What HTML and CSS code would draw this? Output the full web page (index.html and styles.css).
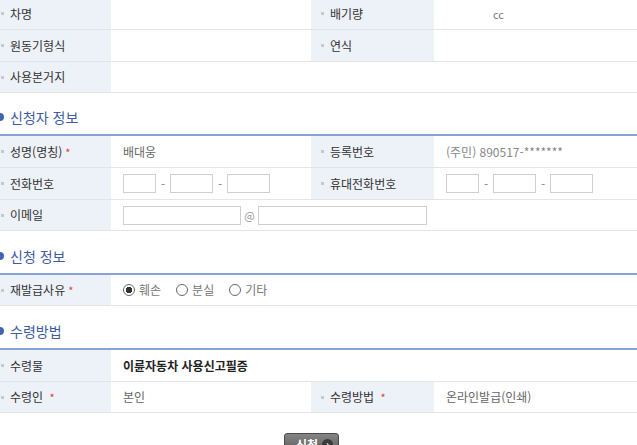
FILE: index.html
```html
<!DOCTYPE html>
<html lang="ko">

<head>
  <meta charset="UTF-8">
  <meta name="viewport" content="width=device-width, initial-scale=1.0">
  <link rel="stylesheet" href="styles.css">
  <title>재발급 신청</title>
</head>

<body>
  <div class="page">
    <table class="info first">
      <colgroup>
        <col class="c-th1"><col class="c-td1"><col class="c-th2"><col>
      </colgroup>
      <tr>
        <th>차명</th>
        <td></td>
        <th>배기량</th>
        <td><span class="unit">cc</span></td>
      </tr>
      <tr>
        <th>원동기형식</th>
        <td></td>
        <th>연식</th>
        <td></td>
      </tr>
      <tr>
        <th>사용본거지</th>
        <td colspan="3"></td>
      </tr>
    </table>

    <h3 class="sect"><span class="dot"></span>신청자 정보</h3>
    <table class="info">
      <colgroup>
        <col class="c-th1"><col class="c-td1"><col class="c-th2"><col>
      </colgroup>
      <tr>
        <th>성명(명칭)<span class="req">*</span></th>
        <td>배대웅</td>
        <th>등록번호</th>
        <td class="light">(주민) 890517-*******</td>
      </tr>
      <tr>
        <th>전화번호</th>
        <td>
          <div class="tel">
            <input type="text" class="w1"><span>-</span><input type="text" class="w2"><span>-</span><input type="text" class="w2">
          </div>
        </td>
        <th>휴대전화번호</th>
        <td>
          <div class="tel">
            <input type="text" class="w1"><span>-</span><input type="text" class="w2"><span>-</span><input type="text" class="w2">
          </div>
        </td>
      </tr>
      <tr>
        <th>이메일</th>
        <td colspan="3">
          <div class="mail">
            <input type="text" class="m1"><span class="at">@</span><input type="text" class="m2">
          </div>
        </td>
      </tr>
    </table>

    <h3 class="sect"><span class="dot"></span>신청 정보</h3>
    <table class="info">
      <colgroup>
        <col class="c-th1"><col class="c-td1"><col class="c-th2"><col>
      </colgroup>
      <tr>
        <th>재발급사유<span class="req">*</span></th>
        <td colspan="3">
          <div class="radios">
            <label><input type="radio" name="why" checked>훼손</label>
            <label><input type="radio" name="why">분실</label>
            <label><input type="radio" name="why">기타</label>
          </div>
        </td>
      </tr>
    </table>

    <h3 class="sect"><span class="dot"></span>수령방법</h3>
    <table class="info">
      <colgroup>
        <col class="c-th1"><col class="c-td1"><col class="c-th2"><col>
      </colgroup>
      <tr>
        <th>수령물</th>
        <td colspan="3" class="strong">이륜자동차 사용신고필증</td>
      </tr>
      <tr>
        <th>수령인 <span class="req">*</span></th>
        <td>본인</td>
        <th>수령방법 <span class="req">*</span></th>
        <td>온라인발급(인쇄)</td>
      </tr>
    </table>

    <div class="btns">
      <button type="button" class="btn">신청<span class="arr">›</span></button>
    </div>
  </div>
</body>

</html>
```

FILE: styles.css
```css
body {
  margin: 0;
  padding: 0;
  overflow: hidden;
  font-family: "Noto Sans CJK KR", "Noto Sans", sans-serif;
  font-size: 12px;
  color: #666;
}

.page {
  width: 650px;
  margin-left: -9px;
}

.info {
  width: 100%;
  border-collapse: separate;
  border-spacing: 0;
  table-layout: fixed;
  border-top: 2px solid #85a3d6;
}

.info.first {
  border-top: 0;
  margin-top: -2px;
}

.c-th1 {
  width: 120px;
}

.c-td1 {
  width: 200px;
}

.c-th2 {
  width: 123px;
}

.info th,
.info td {
  box-sizing: border-box;
  height: 32px;
  padding: 0;
  border-bottom: 1px solid #e4e4e4;
  line-height: 16px;
}

.info tr:last-child th,
.info tr:last-child td {
  height: 31px;
}

.info th {
  padding-left: 19px;
  text-align: left;
  font-weight: normal;
  color: #333;
  background: linear-gradient(#c8c8c8, #c8c8c8) 10px 50% / 3px 3px no-repeat, #edf1f8;
}

.info td {
  padding-left: 12px;
}

.info td.light {
  color: #888;
}

.info td.strong {
  font-weight: bold;
  color: #222;
}

.req {
  color: #e0403a;
  font-size: 11px;
  margin-left: 3px;
}

.unit {
  padding-left: 47px;
  font-size: 11px;
  color: #777;
}

.tel,
.mail {
  display: flex;
  align-items: center;
}

.tel span {
  width: 14px;
  text-align: center;
  color: #888;
}

input[type="text"] {
  box-sizing: border-box;
  height: 19px;
  margin: 0;
  border: 1px solid #cfcfcf;
  background: #fff;
}

.w1 {
  width: 33px;
}

.w2 {
  width: 43px;
}

.m1 {
  width: 118px;
}

.m2 {
  width: 169px;
}

.at {
  width: 17px;
  text-align: center;
  color: #999;
  font-size: 11px;
}

.radios {
  display: flex;
  gap: 15px;
}

.radios label {
  display: flex;
  align-items: center;
  gap: 4px;
  color: #777;
}

.radios input {
  appearance: none;
  width: 12px;
  height: 12px;
  margin: 0;
  border: 1px solid #666;
  border-radius: 50%;
  background: #fff;
}

.radios input:checked {
  background: radial-gradient(circle, #333 0 3px, #fff 3.5px);
}

.sect {
  display: flex;
  align-items: center;
  gap: 6px;
  height: 42px;
  box-sizing: border-box;
  margin: 0;
  padding: 16px 0 8px 5px;
  font-size: 14px;
  font-weight: normal;
  line-height: 18px;
  color: #3e5ba3;
}

.first + .sect {
  height: 41px;
  padding-top: 15px;
}

.dot {
  width: 8px;
  height: 8px;
  border-radius: 50%;
  background: #3f63b5;
}

.btns {
  display: flex;
  justify-content: center;
  padding: 20px 9px 0 0;
}

.btn {
  display: flex;
  align-items: center;
  gap: 4px;
  height: 22px;
  padding: 0 5px 0 11px;
  border: 1px solid #4a4a4a;
  border-radius: 3px;
  background: linear-gradient(#858585, #585858);
  color: #fff;
  font-family: inherit;
  font-size: 12px;
  font-weight: bold;
}

.arr {
  width: 11px;
  height: 11px;
  border-radius: 50%;
  background: #3a3a3a;
  font-size: 10px;
  line-height: 10px;
  text-align: center;
}
```
